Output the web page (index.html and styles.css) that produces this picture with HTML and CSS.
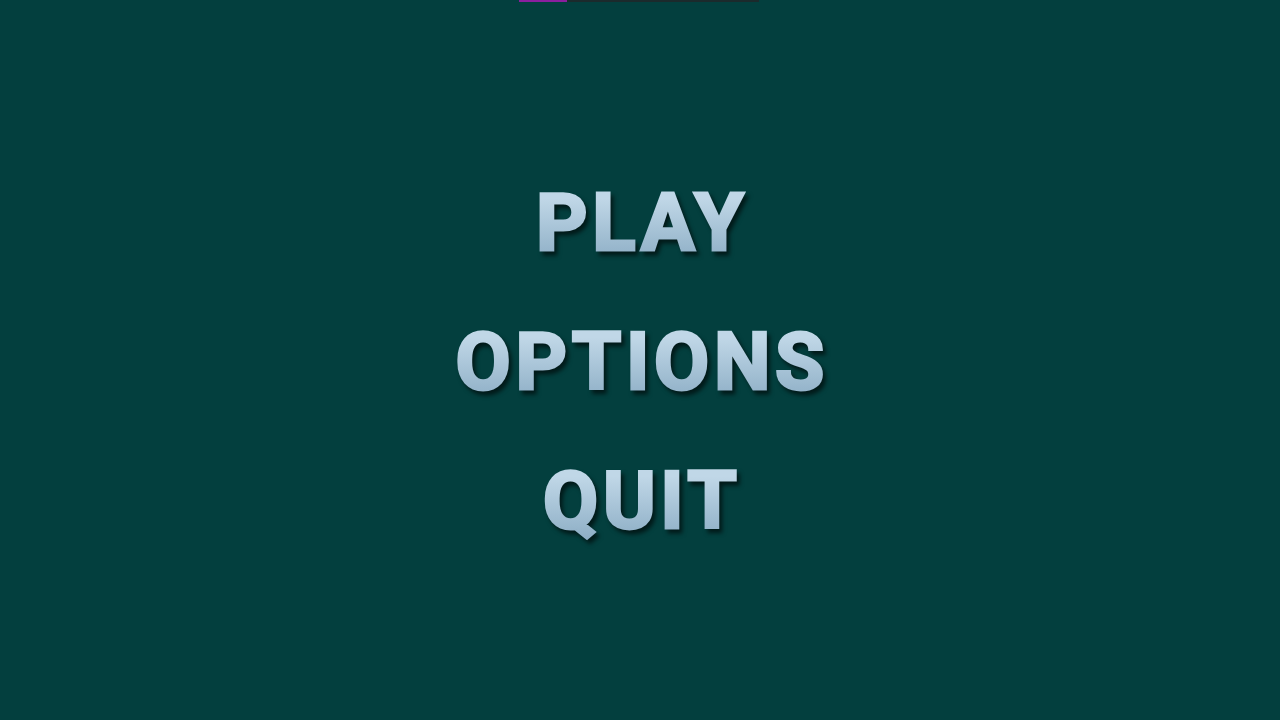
FILE: index.html
```html
<!DOCTYPE html>
<html>
<head>
<meta charset="utf-8">
<link rel="stylesheet" href="styles.css">
</head>
<body>
<div class="screen">
  <div class="loader"><div class="loader-fill"></div></div>
  <nav class="menu">
    <div class="item">PLAY</div>
    <div class="item">OPTIONS</div>
    <div class="item">QUIT</div>
  </nav>
</div>
</body>
</html>
```
FILE: styles.css
```css
html, body {
  margin: 0;
  padding: 0;
  width: 1280px;
  height: 720px;
  overflow: hidden;
  background: #033f3e;
}
.screen {
  position: relative;
  width: 1280px;
  height: 720px;
  display: flex;
  align-items: center;
  justify-content: center;
}
.loader {
  position: absolute;
  top: 0;
  left: 519px;
  width: 240px;
  height: 2px;
  background: #1b2a2c;
}
.loader-fill {
  width: 48px;
  height: 100%;
  background: #8a1f9e;
}
.menu {
  display: flex;
  flex-direction: column;
  align-items: center;
  padding-top: 5px;
  filter: drop-shadow(3px 4px 2px rgba(0, 0, 0, 0.6));
}
.item {
  font-family: Roboto, "Liberation Sans", sans-serif;
  font-weight: 700;
  font-size: 80px;
  line-height: 139px;
  letter-spacing: 4.7px;
  margin-right: -4.7px;
  -webkit-text-stroke: 3px transparent;
  background: linear-gradient(to bottom, #c0d7e7 32%, #88aac2 82%);
  -webkit-background-clip: text;
  background-clip: text;
  color: transparent;
}
```
